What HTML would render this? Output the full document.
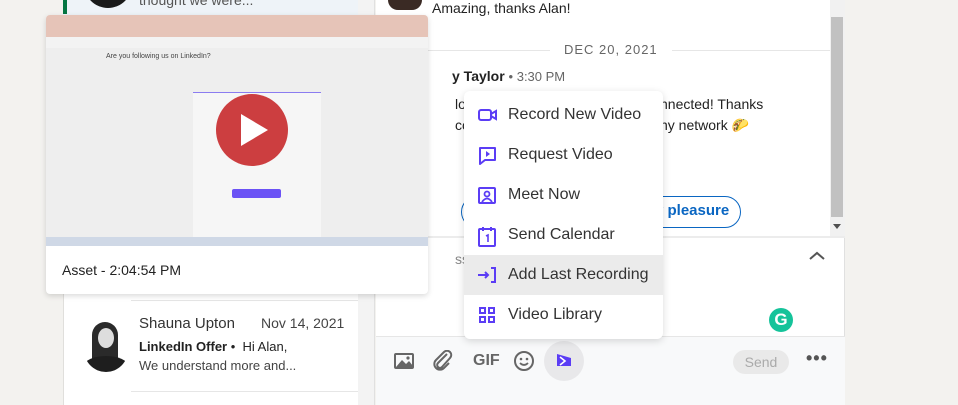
<!DOCTYPE html>
<html><head><style>
*{margin:0;padding:0;box-sizing:border-box}
body{width:958px;height:405px;overflow:hidden;background:#f3f2ef;font-family:"Liberation Sans",sans-serif;position:relative;color:#000}
.abs{position:absolute}
.menu div.it{position:absolute;left:0;width:199px;height:40px;font-size:16px;color:#333;line-height:40px;padding-left:44px}
.menu svg{position:absolute;left:14px;top:11px}
</style></head><body>
<!-- left panel -->
<div class="abs" style="left:63px;top:0;width:295px;height:405px;background:#fff;border-left:1px solid #e0dfdc"></div>
<div class="abs" style="left:63px;top:0;width:295px;height:16px;background:#eef3f8"></div>
<div class="abs" style="left:63px;top:0;width:4px;height:14px;background:#057642"></div>
<div class="abs" style="left:84px;top:-40px;width:48px;height:48px;border-radius:50%;background:#1a1a1a"></div>
<div class="abs" style="left:139px;top:-8px;font-size:14px;color:#555">thought we were...</div>
<div class="abs" style="left:358px;top:0;width:17px;height:405px;background:#f3f3f3;border-right:1px solid #e0e0e0"></div>
<div class="abs" style="left:131px;top:300px;width:227px;height:1px;background:#e6e6e6"></div>
<div class="abs" style="left:131px;top:391px;width:227px;height:1px;background:#e6e6e6"></div>
<div class="abs" style="left:84px;top:322px;width:44px;height:50px;overflow:hidden;border-radius:0 0 22px 22px">
 <div class="abs" style="left:8px;top:0;width:26px;height:46px;border-radius:13px 13px 4px 4px;background:#2a2a2a"></div>
 <div class="abs" style="left:14px;top:6px;width:16px;height:20px;border-radius:50%;background:#ddd"></div>
 <div class="abs" style="left:0;top:34px;width:44px;height:20px;border-radius:50% 50% 0 0;background:#1e1e1e"></div>
</div>
<div class="abs" style="left:139px;top:315px;font-size:15px;color:#333">Shauna Upton</div>
<div class="abs" style="left:261px;top:315px;font-size:14px;color:#444">Nov 14, 2021</div>
<div class="abs" style="left:139px;top:339px;font-size:13px;color:#222"><b>LinkedIn Offer</b> •&nbsp; Hi Alan,</div>
<div class="abs" style="left:139px;top:358px;font-size:13px;color:#444">We understand more and...</div>
<!-- right panel -->
<div class="abs" style="left:376px;top:0;width:469px;height:405px;background:#fff;border-right:1px solid #e0e0e0"></div>
<div class="abs" style="left:388px;top:0;width:34px;height:10px;border-radius:0 0 17px 17px;background:#3a2a24"></div>
<div class="abs" style="left:432px;top:0;font-size:14px;color:#222">Amazing, thanks Alan!</div>
<div class="abs" style="left:376px;top:50px;width:454px;height:1px;background:#e6e6e6"></div>
<div class="abs" style="left:550px;top:42px;padding:0 14px;background:#fff;font-size:13px;letter-spacing:1px;color:#666">DEC 20, 2021</div>
<div class="abs" style="left:452px;top:68px;font-size:14px;color:#222;font-weight:bold">y Taylor <span style="font-weight:normal;color:#666;font-size:13px">• 3:30 PM</span></div>
<div class="abs" style="left:455px;top:96px;font-size:14px;color:#222">lo</div>
<div class="abs" style="left:455px;top:117px;font-size:14px;color:#222">cc</div>
<div class="abs" style="left:660px;top:96px;font-size:14px;color:#222">nnected! Thanks</div>
<div class="abs" style="left:660px;top:117px;font-size:14px;color:#222">ny network <span style="color:#d9a400">🌮</span></div>
<div class="abs" style="left:461px;top:196px;width:280px;height:32px;border:1.5px solid #0a66c2;border-radius:16px"></div>
<div class="abs" style="left:655px;top:202px;font-size:15px;font-weight:bold;color:#0a66c2">y pleasure</div>
<div class="abs" style="left:830px;top:0;width:15px;height:236px;background:#f1f1f1"></div>
<div class="abs" style="left:831px;top:17px;width:12px;height:200px;background:#c1c1c1"></div>
<div class="abs" style="left:833px;top:224px;border:4px solid transparent;border-top:5px solid #505050"></div>
<div class="abs" style="left:376px;top:236px;width:469px;height:2px;background:#ececec"></div>
<div class="abs" style="left:455px;top:251px;font-size:14px;color:#888">ss</div>
<svg class="abs" style="left:808px;top:250px" width="18" height="12"><path d="M2 9 L9 3 L16 9" fill="none" stroke="#555" stroke-width="2"/></svg>
<div class="abs" style="left:769px;top:308px;width:24px;height:24px;border-radius:50%;background:#15c39a;color:#fff;font-weight:bold;font-size:17px;text-align:center;line-height:24px">G</div>
<div class="abs" style="left:376px;top:336px;width:469px;height:69px;background:#f8f9fa;border-top:1px solid #e6e6e6"></div>
<svg class="abs" style="left:394px;top:352px" width="20" height="18"><rect x="1" y="2" width="18" height="14" rx="1" fill="none" stroke="#666" stroke-width="2"/><path d="M2 15 L8 8 L12 12 L15 9 L19 14 V16 H2Z" fill="#666"/><circle cx="14" cy="6" r="1.6" fill="#666"/></svg>
<svg class="abs" style="left:433px;top:350px" width="20" height="22"><path d="M14 4 L5 13 a2.5 2.5 0 0 0 4 4 L17 8 a4 4 0 0 0 -6 -6 L3 10 a5.5 5.5 0 0 0 8 8 L16 13" fill="none" stroke="#666" stroke-width="2"/></svg>
<div class="abs" style="left:473px;top:352px;font-size:16px;font-weight:bold;color:#666">GIF</div>
<svg class="abs" style="left:513px;top:350px" width="22" height="22"><circle cx="11" cy="11" r="9" fill="none" stroke="#666" stroke-width="2"/><circle cx="8" cy="9" r="1.3" fill="#666"/><circle cx="14" cy="9" r="1.3" fill="#666"/><path d="M7 13 q4 4 8 0" fill="none" stroke="#666" stroke-width="1.8"/></svg>
<div class="abs" style="left:544px;top:341px;width:40px;height:40px;border-radius:50%;background:#e8e8ea"></div>
<svg class="abs" style="left:557px;top:353px" width="14" height="14"><path d="M0 1 L14 5 V13 L0 13Z" fill="#5b3df5"/><path d="M3 4 L8 8 L3 12" fill="none" stroke="#fff" stroke-width="1.6"/></svg>
<div class="abs" style="left:733px;top:350px;width:56px;height:24px;border-radius:12px;background:#e9e9e9;color:#aaa;font-size:14px;text-align:center;line-height:24px">Send</div>
<div class="abs" style="left:806px;top:348px;font-size:18px;color:#555;letter-spacing:1px;font-weight:bold">•••</div>
<!-- video card -->
<div class="abs" style="left:46px;top:15px;width:382px;height:279px;background:#fff;border-radius:4px;box-shadow:0 2px 6px rgba(0,0,0,.15);overflow:hidden">
 <div style="height:231px;background:#eeeeee;position:relative;overflow:hidden">
  <div class="abs" style="left:0;top:0;width:382px;height:22px;background:#e6c4b8"></div>
  <div class="abs" style="left:0;top:22px;width:382px;height:11px;background:#f3f3f3"></div>
  <div class="abs" style="left:60px;top:38px;font-size:7px;color:#444">Are you following us on LinkedIn?</div>
  <div class="abs" style="left:147px;top:77px;width:128px;height:150px;background:#f6f6f6;border-top:1px solid #8b7cf0"></div>
  <div class="abs" style="left:186px;top:174px;width:49px;height:9px;background:#6b52f5;border-radius:2px"></div>
  <div class="abs" style="left:395px;top:45px;width:3px;height:120px;background:#ccc"></div>
  <div class="abs" style="left:0;top:222px;width:382px;height:9px;background:#cfd8e6"></div>
 </div>
 <div class="abs" style="left:170px;top:79px;width:72px;height:72px;border-radius:50%;background:#cc3e40"></div>
 <svg class="abs" style="left:195px;top:99px" width="30" height="32"><path d="M0 0 L27 16 L0 32Z" fill="#fff"/></svg>
 <div class="abs" style="left:16px;top:247px;font-size:14px;color:#222">Asset - 2:04:54 PM</div>
 <svg class="abs" style="left:383px;top:248px" width="14" height="14"><path d="M6 2 H2 V12 H12 V8" fill="none" stroke="#222" stroke-width="2.2"/><path d="M6 8 L12 2 M8 2 H12 V6" fill="none" stroke="#222" stroke-width="2.2"/></svg>
</div>
<!-- menu -->
<div class="abs menu" style="left:464px;top:91px;width:199px;height:248px;background:#fff;border-radius:6px;box-shadow:0 2px 8px rgba(0,0,0,.15)">
 <div class="it" style="top:4px"><svg width="20" height="18"><rect x="1" y="4" width="12" height="10" rx="2" fill="none" stroke="#5b3df5" stroke-width="2"/><path d="M13 8 L18 5 V13 L13 10" fill="none" stroke="#5b3df5" stroke-width="2"/></svg>Record New Video</div>
 <div class="it" style="top:44px"><svg width="20" height="20"><path d="M2 2 H17 V14 H7 L2 18Z" fill="none" stroke="#5b3df5" stroke-width="2" stroke-linejoin="round"/><path d="M8 5 L12 8 L8 11Z" fill="#5b3df5"/></svg>Request Video</div>
 <div class="it" style="top:84px"><svg width="20" height="20"><rect x="1" y="2" width="16" height="15" rx="1" fill="none" stroke="#5b3df5" stroke-width="2"/><circle cx="9" cy="8" r="2.5" fill="none" stroke="#5b3df5" stroke-width="1.8"/><path d="M4 16 q5 -7 10 0" fill="none" stroke="#5b3df5" stroke-width="1.8"/></svg>Meet Now</div>
 <div class="it" style="top:124px"><svg width="20" height="22"><rect x="1" y="3" width="16" height="17" rx="1" fill="none" stroke="#5b3df5" stroke-width="2"/><path d="M5 1 V5 M13 1 V5" stroke="#5b3df5" stroke-width="2"/><path d="M8 10 L10 9 V16" fill="none" stroke="#5b3df5" stroke-width="1.6"/></svg>Send Calendar</div>
 <div class="it" style="top:164px;background:#ebebeb"><svg width="22" height="20"><path d="M0 9 H10 M7 6 L10 9 L7 12" fill="none" stroke="#5b3df5" stroke-width="2"/><path d="M13 2 H17 V16 H13" fill="none" stroke="#5b3df5" stroke-width="2"/></svg>Add Last Recording</div>
 <div class="it" style="top:204px"><svg width="20" height="20"><g fill="none" stroke="#5b3df5" stroke-width="2"><rect x="2" y="2" width="5" height="5"/><rect x="11" y="2" width="5" height="5"/><rect x="2" y="11" width="5" height="5"/><rect x="11" y="11" width="5" height="5"/></g></svg>Video Library</div>
</div>
</body></html>
